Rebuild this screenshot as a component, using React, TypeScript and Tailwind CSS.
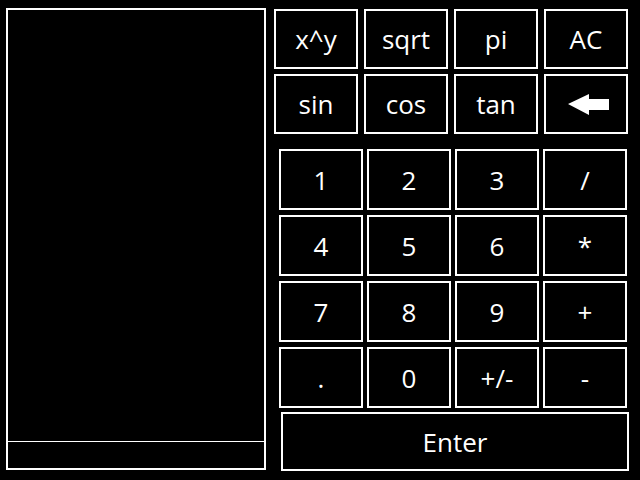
import React from "react";

const font = { fontFamily: '"Open Sans", "Noto Sans", sans-serif' };

function Btn({ children, className = "" }: { children: React.ReactNode; className?: string }) {
  return (
    <div
      className={
        "flex items-center justify-center border-2 border-white text-white text-[26px] leading-none " +
        className
      }
    >
      {children}
    </div>
  );
}

function Arrow() {
  return (
    <svg width="42" height="21" viewBox="0 0 42 21" className="ml-[6px]">
      <polygon points="0,10 21,0 21,5 41,5 41,16 21,16 21,21" fill="white" />
    </svg>
  );
}

export default function App() {
  const top = ["x^y", "sqrt", "pi", "AC", "sin", "cos", "tan"];
  const keys = ["1", "2", "3", "/", "4", "5", "6", "*", "7", "8", "9", "+", ".", "0", "+/-", "-"];
  return (
    <div className="w-[640px] h-[480px] bg-black flex overflow-hidden" style={font}>
      <div className="ml-[6px] mt-[8px] w-[260px] h-[462px] border-2 border-white flex flex-col">
        <div className="flex-1" />
        <div className="h-[27px] border-t border-white" />
      </div>
      <div className="flex flex-col">
        <div className="ml-[8px] mt-[9px] grid grid-cols-[repeat(4,84px)] grid-rows-[repeat(2,60px)] gap-x-[6px] gap-y-[5px]">
          {top.map((t) => (
            <Btn key={t}>{t}</Btn>
          ))}
          <Btn>
            <Arrow />
          </Btn>
        </div>
        <div className="ml-[13px] mt-[15px] grid grid-cols-[repeat(4,84px)] grid-rows-[repeat(4,61px)] gap-x-[4px] gap-y-[5px]">
          {keys.map((k) => (
            <Btn key={k}>{k}</Btn>
          ))}
        </div>
        <Btn className="ml-[15px] mt-[4px] w-[348px] h-[59px]">Enter</Btn>
      </div>
    </div>
  );
}
